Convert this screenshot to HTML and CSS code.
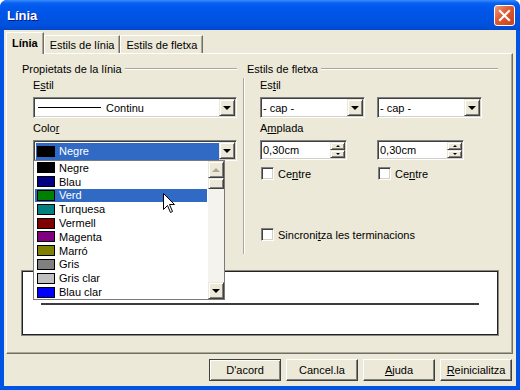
FILE: index.html
```html
<!DOCTYPE html>
<html lang="ca">
<head>
    <meta charset="UTF-8">
    <title>Línia</title>
    <link rel="stylesheet" href="styles.css">
</head>
<body>
    <div class="window">
        <div class="titlebar">
            <span class="title">Línia</span>
            <button class="close-btn">
                <svg width="13" height="13" viewBox="0 0 13 13"><path d="M2 2 L11 11 M11 2 L2 11" stroke="#fff" stroke-width="2.2" stroke-linecap="square"/></svg>
            </button>
        </div>

        <div class="client">
            <div class="tabs">
                <div class="tab active">Línia</div>
                <div class="tab">Estils de línia</div>
                <div class="tab">Estils de fletxa</div>
            </div>

            <div class="panel">
                <div class="groups">
                    <div class="group">
                        <div class="group-title"><span>Propietats de la línia</span><span class="rule"></span></div>
                        <div class="group-body left-body">
                            <div class="field-label">E<u>s</u>til</div>
                            <div class="combo">
                                <div class="combo-value"><span class="line-sample"></span>Continu</div>
                                <span class="drop-btn"><span class="arrow-down"></span></span>
                            </div>

                            <div class="field-label">Colo<u>r</u></div>
                            <div class="combo color-combo">
                                <div class="combo-value"><span class="highlight"><span class="swatch" style="background:#000000"></span>Negre</span></div>
                                <span class="drop-btn"><span class="arrow-down"></span></span>

                                <div class="dropdown">
                                    <ul class="color-list">
                                        <li><span class="swatch" style="background:#000000"></span>Negre</li>
                                        <li><span class="swatch" style="background:#000080"></span>Blau</li>
                                        <li class="selected"><span class="swatch" style="background:#008000"></span>Verd</li>
                                        <li><span class="swatch" style="background:#008080"></span>Turquesa</li>
                                        <li><span class="swatch" style="background:#800000"></span>Vermell</li>
                                        <li><span class="swatch" style="background:#800080"></span>Magenta</li>
                                        <li><span class="swatch" style="background:#808000"></span>Marró</li>
                                        <li><span class="swatch" style="background:#808080"></span>Gris</li>
                                        <li><span class="swatch" style="background:#c0c0c0"></span>Gris clar</li>
                                        <li><span class="swatch" style="background:#0000ff"></span>Blau clar</li>
                                    </ul>
                                    <div class="scrollbar">
                                        <span class="scroll-btn"><span class="arrow-up disabled"></span></span>
                                        <span class="scroll-thumb"></span>
                                        <span class="scroll-track"></span>
                                        <span class="scroll-btn"><span class="arrow-down"></span></span>
                                    </div>
                                </div>
                            </div>
                        </div>
                    </div>

                    <div class="group">
                        <div class="group-title right-title"><span>Estils de fletxa</span><span class="rule"></span></div>
                        <div class="group-body right-body">
                            <div class="field-label">Es<u>t</u>il</div>
                            <div class="pair">
                                <div class="combo">
                                    <div class="combo-value">- cap -</div>
                                    <span class="drop-btn"><span class="arrow-down"></span></span>
                                </div>
                                <div class="combo">
                                    <div class="combo-value">- cap -</div>
                                    <span class="drop-btn"><span class="arrow-down"></span></span>
                                </div>
                            </div>

                            <div class="field-label">A<u>m</u>plada</div>
                            <div class="pair">
                                <div class="spin">
                                    <div class="combo-value">0,30cm</div>
                                    <span class="spin-btns">
                                        <span class="spin-btn"><span class="tiny-up"></span></span>
                                        <span class="spin-btn"><span class="tiny-down"></span></span>
                                    </span>
                                </div>
                                <div class="spin">
                                    <div class="combo-value">0,30cm</div>
                                    <span class="spin-btns">
                                        <span class="spin-btn"><span class="tiny-up"></span></span>
                                        <span class="spin-btn"><span class="tiny-down"></span></span>
                                    </span>
                                </div>
                            </div>

                            <div class="pair checks">
                                <label class="check"><span class="box"></span>Ce<u>n</u>tre</label>
                                <label class="check"><span class="box"></span>Ce<u>n</u>tre</label>
                            </div>

                            <label class="check sync"><span class="box"></span>Sincroni<u>t</u>za les terminacions</label>
                        </div>
                    </div>
                </div>

                <div class="preview">
                    <div class="preview-line"></div>
                </div>
            </div>

            <div class="buttons">
                <button class="btn default">D'acord</button>
                <button class="btn">Cancel.la</button>
                <button class="btn"><u>A</u>juda</button>
                <button class="btn"><u>R</u>einicialitza</button>
            </div>
        </div>

        <svg class="cursor" width="13" height="21" viewBox="0 0 13 21">
            <path d="M0.5 0.5 L0.5 16.5 L4.5 12.5 L7.5 19.5 L9.5 18.5 L6.5 11.5 L11.5 11.5 Z" fill="#fff" stroke="#000" stroke-width="1"/>
        </svg>
    </div>
</body>
</html>
```

FILE: styles.css
```css
body {
    margin: 0;
    font-family: 'Liberation Sans', Arial, sans-serif;
    font-size: 11px;
    color: #000;
}

.window {
    position: relative;
    width: 520px;
    height: 390px;
    display: flex;
    flex-direction: column;
    background: #0054e3;
    border-radius: 7px 7px 0 0;
    overflow: hidden;
}

.titlebar {
    height: 30px;
    flex: none;
    display: flex;
    align-items: center;
    justify-content: space-between;
    padding: 0 5px 0 7px;
    background: linear-gradient(#3a8cff 0%, #0a61f0 10%, #0058ee 22%, #0054e3 55%, #0050dc 85%, #0048cc 100%);
}

.title {
    color: #fff;
    font-weight: bold;
    font-size: 13px;
    text-shadow: 1px 1px #0a1883;
}

.close-btn {
    width: 21px;
    height: 21px;
    padding: 0;
    display: flex;
    align-items: center;
    justify-content: center;
    border: 1px solid #fff;
    border-radius: 3px;
    background: linear-gradient(135deg, #f09a78, #e0582f 45%, #c4401c);
}

.client {
    flex: 1;
    margin: 0 4px 4px;
    padding: 2px 3px 5px 2px;
    background: #ece9d8;
    display: flex;
    flex-direction: column;
}

/* tabs */
.tabs {
    height: 21px;
    display: flex;
    align-items: flex-end;
}

.tab {
    height: 18px;
    padding: 0 5px;
    display: flex;
    align-items: center;
    box-sizing: border-box;
    border: 1px solid;
    border-bottom: none;
    border-color: #fff #716f64 transparent #fff;
    box-shadow: inset -1px 0 #aca899;
}

.tab.active {
    height: 22px;
    margin-bottom: -1px;
    position: relative;
    z-index: 1;
    font-weight: bold;
    background: #ece9d8;
    padding-bottom: 2px;
}

.panel {
    flex: 1;
    border: 1px solid;
    border-color: #fff #716f64 #716f64 #fff;
    box-shadow: inset -1px -1px #aca899;
    padding: 8px 14px 0 15px;
}

.groups {
    display: grid;
    grid-template-columns: 215px 255px;
    column-gap: 6px;
    align-items: start;
}

.group-title {
    height: 13px;
    display: flex;
    align-items: center;
    gap: 3px;
}

.right-title {
    padding-left: 4px;
}

.rule {
    flex: 1;
    border-top: 1px solid #aca899;
    border-bottom: 1px solid #fff;
}

.left-body {
    padding: 4px 0 0 11px;
}

.right-body {
    margin-top: 3px;
    padding: 1px 0 13px 16px;
    border-left: 1px solid #aca899;
    box-shadow: inset 1px 0 #fff;
}

.field-label {
    height: 13px;
    line-height: 13px;
    margin-bottom: 5px;
}

.combo + .field-label,
.pair + .field-label {
    margin-top: 4px;
}

/* combo boxes */
.combo,
.spin {
    position: relative;
    height: 21px;
    box-sizing: border-box;
    display: flex;
    padding: 1px;
    background: #fff;
    border: 1px solid;
    border-color: #808080 #fff #fff #808080;
    box-shadow: inset 1px 1px #404040, inset -1px -1px #d4d0c8;
}

.spin {
    width: 87px;
    height: 20px;
}

.combo-value {
    flex: 1;
    display: flex;
    align-items: center;
    padding-left: 1px;
    white-space: nowrap;
}

.line-sample {
    width: 63px;
    border-top: 1px solid #000;
    margin: 0 5px 0 2px;
}

.drop-btn,
.scroll-btn,
.scroll-thumb,
.spin-btn {
    box-sizing: border-box;
    background: #ece9d8;
    border: 1px solid;
    border-color: #ece9d8 #404040 #404040 #ece9d8;
    box-shadow: inset 1px 1px #fff, inset -1px -1px #808080;
    display: flex;
    align-items: center;
    justify-content: center;
}

.drop-btn {
    width: 16px;
}

.arrow-down {
    width: 0;
    height: 0;
    border-left: 4px solid transparent;
    border-right: 4px solid transparent;
    border-top: 4px solid #000;
}

.arrow-up {
    width: 0;
    height: 0;
    border-left: 4px solid transparent;
    border-right: 4px solid transparent;
    border-bottom: 4px solid #000;
}

.arrow-up.disabled {
    border-bottom-color: #aca899;
}

.color-combo .combo-value {
    padding: 1px 0 0 1px;
}

.highlight {
    flex: 1;
    height: 17px;
    display: flex;
    align-items: center;
    background: #316ac5;
    color: #fff;
}

.swatch {
    width: 18px;
    height: 11px;
    box-sizing: border-box;
    border: 1px solid #000;
    margin: 0 4px 0 1px;
    flex: none;
}

/* dropdown list */
.dropdown {
    position: absolute;
    top: 100%;
    left: -1px;
    width: 192px;
    height: 140px;
    box-sizing: border-box;
    display: flex;
    background: #fff;
    border: 1px solid #7a7a7a;
    z-index: 5;
}

.color-list {
    flex: 1;
    list-style: none;
    margin: 0;
    padding: 0 1px;
}

.color-list li {
    height: 13.8px;
    display: flex;
    align-items: center;
    padding-left: 1px;
}

.color-list li.selected {
    background: #316ac5;
    color: #fff;
}

.scrollbar {
    width: 16px;
    display: flex;
    flex-direction: column;
}

.scroll-btn {
    height: 17px;
}

.scroll-thumb {
    height: 11px;
}

.scroll-track {
    flex: 1;
    background: #f4f3ee;
}

/* spinners */
.pair {
    display: grid;
    grid-template-columns: 105px 105px;
    column-gap: 12px;
}

.spin-btns {
    width: 15px;
    display: flex;
    flex-direction: column;
}

.spin-btn {
    flex: 1;
}

.tiny-up,
.tiny-down {
    width: 0;
    height: 0;
    border-left: 2px solid transparent;
    border-right: 2px solid transparent;
}

.tiny-up {
    border-bottom: 2px solid #000;
}

.tiny-down {
    border-top: 2px solid #000;
}

/* checkboxes */
.check {
    height: 13px;
    display: flex;
    align-items: center;
}

.checks {
    margin-top: 7px;
}

.box {
    width: 13px;
    height: 13px;
    box-sizing: border-box;
    margin: 0 4px 0 1px;
    background: #fff;
    border: 1px solid;
    border-color: #808080 #fff #fff #808080;
    box-shadow: inset 1px 1px #404040, inset -1px -1px #d4d0c8;
}

.sync {
    margin-top: 48px;
}

/* preview */
.preview {
    margin-top: 17px;
    width: 476px;
    height: 64px;
    box-sizing: border-box;
    background: #fff;
    border: 1px solid #222;
    box-shadow: 0 0 0 1px #8c8a80;
    padding: 31px 18px 0;
}

.preview-line {
    border-top: 2px solid #3c3c3c;
}

/* buttons */
.buttons {
    display: flex;
    justify-content: flex-end;
    gap: 5px;
    margin: 5px 1px 0 0;
}

.btn {
    width: 72px;
    height: 22px;
    padding: 0;
    font-family: inherit;
    font-size: 11px;
    color: #000;
    background: #ece9d8;
    border: 1px solid;
    border-color: #fff #404040 #404040 #fff;
    box-shadow: inset -1px -1px #808080;
}

.btn.default {
    border-color: #404040;
    box-shadow: inset 1px 1px #fff, inset -1px -1px #808080;
}

.cursor {
    position: absolute;
    left: 163px;
    top: 193px;
    z-index: 10;
}
```
